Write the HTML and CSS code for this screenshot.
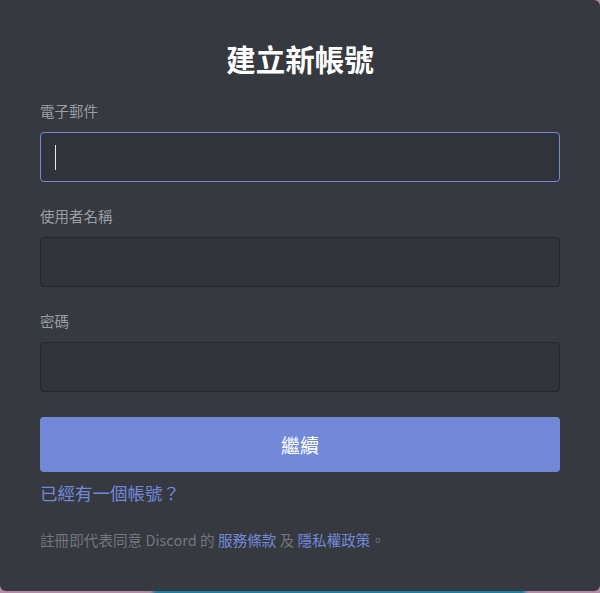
FILE: index.html
```html
<!DOCTYPE html>
<html lang="zh-Hant">
<head>
<meta charset="utf-8">
<title>建立新帳號</title>
<link rel="stylesheet" href="styles.css">
</head>
<body>
<main class="card">
  <h1 class="title">建立新帳號</h1>
  <form class="form">
    <div class="field">
      <label class="label">電子郵件</label>
      <div class="input input-focus"><span class="caret"></span></div>
    </div>
    <div class="field">
      <label class="label">使用者名稱</label>
      <div class="input"></div>
    </div>
    <div class="field">
      <label class="label">密碼</label>
      <div class="input"></div>
    </div>
    <button type="button" class="btn">繼續</button>
    <a class="login-link">已經有一個帳號？</a>
    <p class="terms">註冊即代表同意 Discord 的 <a class="terms-link">服務條款</a> 及 <a class="terms-link">隱私權政策</a>。</p>
  </form>
</main>
</body>
</html>
```

FILE: styles.css
```css
html, body {
  margin: 0;
  padding: 0;
}
body {
  width: 600px;
  height: 593px;
  background: linear-gradient(90deg, #b48aa6 0%, #b48aa6 25%, #1f7fa0 26%, #1f7fa0 87%, #b48aa6 88%);
  font-family: "Noto Sans CJK TC", "Noto Sans", sans-serif;
  overflow: hidden;
}
.card {
  box-sizing: border-box;
  width: 600px;
  height: 591px;
  background: #36393f;
  border-radius: 0 6px 6px 6px;
  padding: 40px 40px 0;
}
.title {
  margin: 0;
  color: #ffffff;
  font-size: 29.5px;
  font-weight: 700;
  line-height: 36px;
  text-align: center;
}
.form {
  margin-top: 26px;
  display: flex;
  flex-direction: column;
}
.field {
  display: flex;
  flex-direction: column;
  margin-bottom: 25px;
}
.label {
  color: #9c9ea3;
  font-size: 14.5px;
  line-height: 18px;
  margin-bottom: 12px;
}
.input {
  box-sizing: border-box;
  height: 50px;
  background: #303339;
  border: 1px solid #25272b;
  border-radius: 4px;
  display: flex;
  align-items: center;
  padding-left: 14px;
}
.input-focus {
  border-color: #7289da;
}
.caret {
  width: 1px;
  height: 25px;
  background: #e8e8e8;
}
.btn {
  height: 55px;
  border: none;
  border-radius: 4px;
  background: #7289da;
  color: #ffffff;
  font-family: inherit;
  font-size: 19px;
  padding: 0;
  margin: 0;
}
.login-link {
  margin-top: 9px;
  color: #7289da;
  font-size: 17.5px;
  line-height: 24px;
}
.terms {
  margin: 25px 0 0;
  color: #72767d;
  font-size: 14.6px;
  line-height: 20px;
}
.terms-link {
  color: #7289da;
}
```
